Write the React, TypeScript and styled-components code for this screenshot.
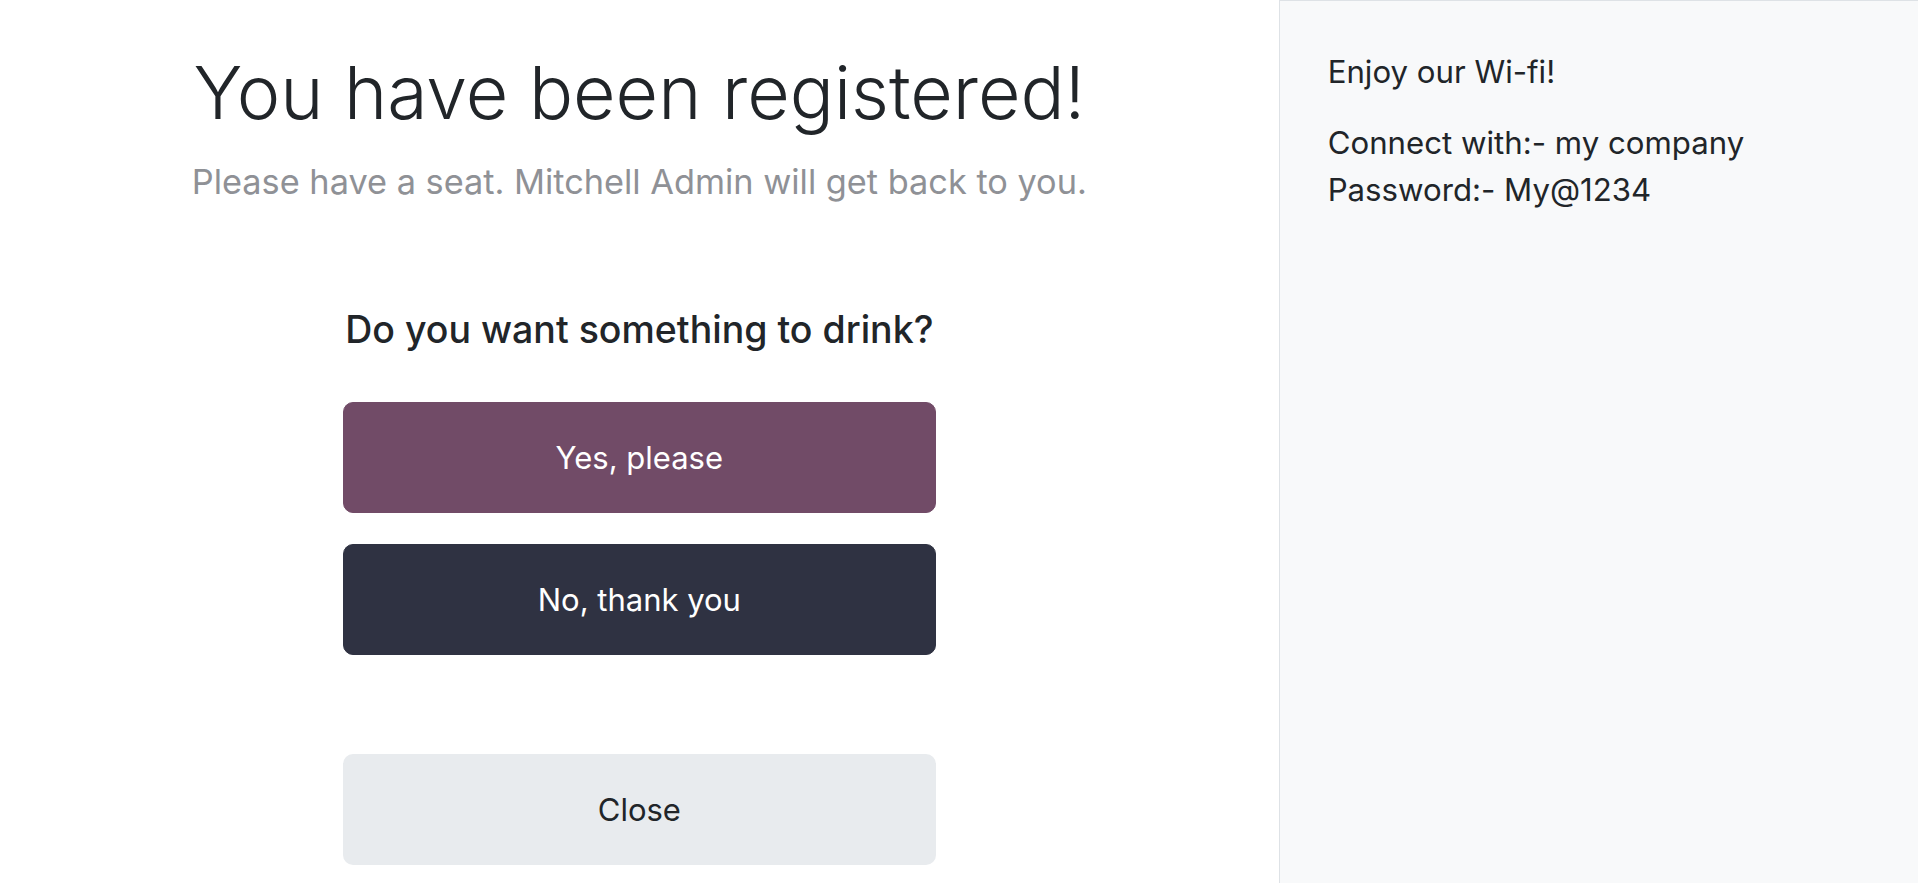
import styled, { createGlobalStyle } from "styled-components";

const GlobalStyle = createGlobalStyle`
  * {
    box-sizing: border-box;
  }
  body {
    margin: 0;
    font-family: Inter, "Noto Sans", sans-serif;
    color: #212529;
    background: #ffffff;
  }
`;

export default function App() {
  return (
    <>
      <GlobalStyle />
      <Page>
        <Main>
          <Title>You have been registered!</Title>
          <Subtitle>Please have a seat. Mitchell Admin will get back to you.</Subtitle>

          <Question>Do you want something to drink?</Question>
          <Actions>
            <Button $variant="primary">Yes, please</Button>
            <Button $variant="dark">No, thank you</Button>
          </Actions>

          <CloseButton>Close</CloseButton>
        </Main>

        <Aside>
          <Info>Enjoy our Wi-fi!</Info>
          <Info>
            Connect with:- my company
            <br />
            Password:- My@1234
          </Info>
        </Aside>
      </Page>
    </>
  );
}

const Page = styled.div`
  display: flex;
  width: 100%;
  height: 100vh;
  overflow: hidden;
`;

const Main = styled.main`
  flex: 0 0 66.6667%;
  display: flex;
  flex-direction: column;
  align-items: center;
  padding-top: 49px;
`;

const Title = styled.h1`
  margin: 0;
  font-size: 73.4px;
  font-weight: 300;
  line-height: 1.2;
  color: #212529;
`;

const Subtitle = styled.p`
  margin: 19px 0 0;
  font-size: 34.3px;
  font-weight: 400;
  line-height: 1.5;
  color: #8f9196;
`;

const Question = styled.h3`
  margin: 99px 0 0;
  font-size: 37.5px;
  font-weight: 500;
  line-height: 1.2;
  color: #212529;
`;

const Actions = styled.div`
  display: flex;
  flex-direction: column;
  gap: 31px;
  width: 593px;
  margin-top: 50px;
`;

const Button = styled.button<{ $variant: "primary" | "dark" }>`
  height: 111px;
  width: 100%;
  border: 1px solid ${(p) => (p.$variant === "primary" ? "#714b67" : "#2f3242")};
  border-radius: 10px;
  background: ${(p) => (p.$variant === "primary" ? "#714b67" : "#2f3242")};
  color: #ffffff;
  font-family: Inter, "Noto Sans", sans-serif;
  font-size: 31px;
  font-weight: 400;
  cursor: pointer;
`;

const CloseButton = styled.button`
  margin-top: 99px;
  width: 593px;
  height: 111px;
  border: none;
  border-radius: 10px;
  background: #e8ebee;
  color: #212529;
  font-family: Inter, "Noto Sans", sans-serif;
  font-size: 31px;
  font-weight: 400;
  cursor: pointer;
`;

const Aside = styled.aside`
  flex: 1 1 auto;
  display: flex;
  flex-direction: column;
  gap: 24px;
  padding: 48px;
  background: #f8f9fa;
  border-left: 1px solid #dee2e6;
  border-top: 1px solid #dee2e6;
`;

const Info = styled.p`
  margin: 0;
  font-size: 31.2px;
  line-height: 1.5;
  color: #212529;
`;
